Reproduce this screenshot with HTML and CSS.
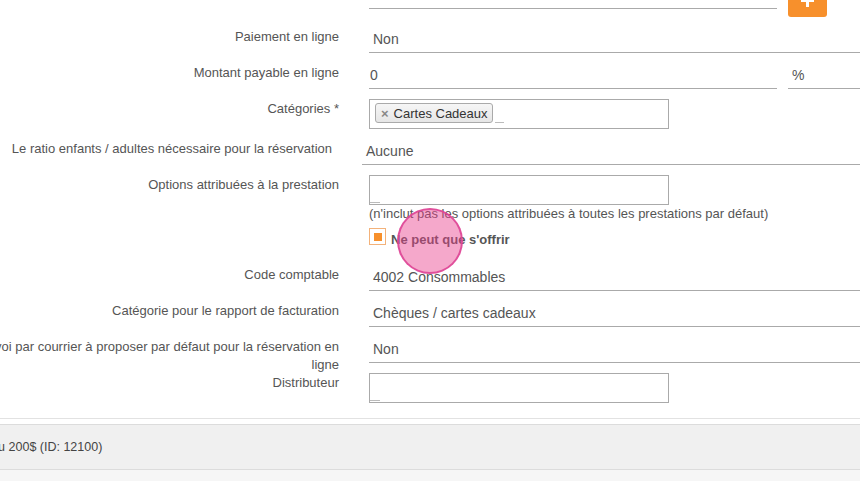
FILE: index.html
```html
<!DOCTYPE html>
<html lang="fr">
<head>
<meta charset="utf-8">
<title>Prestation</title>
<link rel="stylesheet" href="styles.css">
</head>
<body>
<div class="page">
  <div class="form">
    <div class="row">
      <div class="label">Taxe</div>
      <div class="field field--split">
        <div class="line line--main line--faint">Taxe standard</div>
        <button class="add-btn" type="button" aria-label="Ajouter">
          <svg width="13" height="13" viewBox="0 0 13 13"><rect x="5" y="0" width="3" height="13" fill="#fff"/><rect x="0" y="5" width="13" height="3" fill="#fff"/></svg>
        </button>
      </div>
    </div>

    <div class="row">
      <div class="label">Paiement en ligne</div>
      <div class="field"><div class="line">Non</div></div>
    </div>

    <div class="row">
      <div class="label">Montant payable en ligne</div>
      <div class="field field--split">
        <div class="line line--main line--num">0</div>
        <div class="line line--addon">%</div>
      </div>
    </div>

    <div class="row">
      <div class="label">Catégories *</div>
      <div class="field">
        <div class="box box--tags">
          <span class="tag"><span class="tag-x">×</span>Cartes Cadeaux</span>
          <span class="caret-line"></span>
        </div>
      </div>
    </div>

    <div class="row row--shift">
      <div class="label">Le ratio enfants / adultes nécessaire pour la réservation</div>
      <div class="field"><div class="line">Aucune</div></div>
    </div>

    <div class="row">
      <div class="label">Options attribuées à la prestation</div>
      <div class="field">
        <div class="box box--empty"><span class="search-line"></span></div>
        <div class="hint">(n'inclut pas les options attribuées à toutes les prestations par défaut)</div>
        <label class="check">
          <span class="check-box"><span class="check-mark"></span></span>
          <span class="check-text">Ne peut que s'offrir</span>
        </label>
      </div>
    </div>

    <div class="row">
      <div class="label">Code comptable</div>
      <div class="field"><div class="line">4002 Consommables</div></div>
    </div>

    <div class="row">
      <div class="label">Catégorie pour le rapport de facturation</div>
      <div class="field"><div class="line">Chèques / cartes cadeaux</div></div>
    </div>

    <div class="row row--tight">
      <div class="label">Envoi par courrier à proposer par défaut pour la réservation en ligne</div>
      <div class="field"><div class="line">Non</div></div>
    </div>

    <div class="row">
      <div class="label">Distributeur</div>
      <div class="field">
        <div class="box box--empty"><span class="search-line"></span></div>
      </div>
    </div>
  </div>

  <div class="separator"></div>
  <div class="band">Carte cadeau 200$ (ID: 12100)</div>
  <div class="below"></div>

  <div class="cursor-dot"></div>
</div>
</body>
</html>
```

FILE: styles.css
```css
html, body {
  margin: 0;
  padding: 0;
}

body {
  width: 860px;
  height: 481px;
  overflow: hidden;
  background: #fff;
  font-family: "Liberation Sans", Arial, sans-serif;
  color: #555;
}

.page {
  position: relative;
  width: 940px;
  margin-left: -80px;
  margin-top: -17px;
}

.form {
  padding-bottom: 5px;
}

.row {
  display: flex;
  align-items: flex-start;
  margin-bottom: 10px;
}

.row--tight {
  margin-bottom: -1px;
}

.label {
  flex: none;
  width: 419px;
  box-sizing: border-box;
  padding-left: 55px;
  padding-top: 1px;
  text-align: right;
  font-size: 13px;
  line-height: 18px;
  color: #555;
}

.row--shift .label {
  width: 412px;
}

.field {
  flex: 1;
  margin-left: 30px;
  min-width: 0;
}

.field--split {
  display: flex;
  align-items: flex-start;
  gap: 11px;
}

.line {
  height: 26px;
  box-sizing: border-box;
  border-bottom: 1px solid #aaa;
  padding: 3px 4px 0;
  font-size: 14px;
  line-height: 18px;
  color: #555;
  white-space: nowrap;
}

.line--main {
  flex: none;
  width: 408px;
}

.line--num {
  padding-left: 1px;
}

.line--addon {
  flex: 1;
}

.line--faint {
  color: #d4d4d4;
}

.add-btn {
  flex: none;
  width: 39px;
  height: 34px;
  border: 0;
  padding: 0;
  border-radius: 3px;
  background: #f7902c;
  display: flex;
  align-items: center;
  justify-content: center;
}

.add-btn svg {
  display: block;
}

.box {
  width: 300px;
  height: 30px;
  box-sizing: border-box;
  border: 1px solid #aaa;
  background: #fff;
}

.box--tags {
  display: flex;
  align-items: flex-end;
  padding: 3px 5px 5px;
}

.tag {
  display: inline-flex;
  align-items: center;
  height: 20px;
  box-sizing: border-box;
  padding: 0 4px 0 5px;
  border: 1px solid #aaa;
  border-radius: 3px;
  background: linear-gradient(#f6f6f6, #e6e6e6);
  font-size: 13px;
  color: #333;
  white-space: nowrap;
}

.tag-x {
  font-size: 13px;
  font-weight: bold;
  color: #888;
  margin-right: 5px;
}

.caret-line {
  display: inline-block;
  width: 9px;
  height: 1px;
  background: #bbb;
  margin-left: 2px;
}

.box--empty {
  display: flex;
  align-items: flex-end;
  padding: 0 0 1px 0;
}

.search-line {
  display: block;
  width: 10px;
  height: 1px;
  background: #bbb;
}

.hint {
  font-size: 13px;
  line-height: 17px;
  color: #555;
  white-space: nowrap;
}

.check {
  display: flex;
  align-items: flex-start;
  gap: 5px;
  margin: 6px 0 7px;
}

.check-box {
  flex: none;
  width: 17px;
  height: 17px;
  box-sizing: border-box;
  border: 1px solid #f3b27a;
  background: #fff;
  display: flex;
  align-items: center;
  justify-content: center;
}

.check-mark {
  width: 8px;
  height: 8px;
  background: #f7902c;
}

.check-text {
  margin-top: 3px;
  font-size: 13px;
  line-height: 17px;
  font-weight: bold;
  color: #555;
}

.separator {
  border-top: 1px solid #e2e2e2;
  height: 5px;
}

.band {
  height: 46px;
  box-sizing: border-box;
  border-top: 1px solid #dcdcdc;
  border-bottom: 1px solid #dcdcdc;
  background: #f0f0f0;
  padding-left: 10px;
  font-size: 12.5px;
  line-height: 44px;
  color: #444;
}

.below {
  height: 20px;
  background: #f6f6f6;
}

.cursor-dot {
  position: absolute;
  left: 477px;
  top: 225px;
  width: 66px;
  height: 66px;
  box-sizing: border-box;
  border-radius: 50%;
  border: 2px solid rgba(222, 70, 150, 0.9);
  background: rgba(232, 62, 140, 0.45);
}
```
